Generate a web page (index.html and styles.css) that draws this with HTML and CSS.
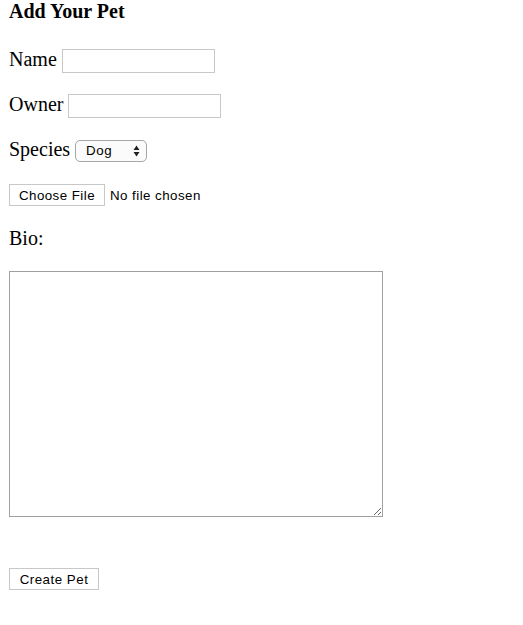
FILE: index.html
```
<!DOCTYPE html>
<html lang="en">
<head>
<meta charset="utf-8">
<title>Add Your Pet</title>
<link rel="stylesheet" href="styles.css">
</head>
<body>
<form class="pet-form">
  <h3 class="title">Add Your Pet</h3>
  <div class="field">
    <label class="label" for="name">Name</label>
    <input class="text-input" id="name" type="text">
  </div>
  <div class="field">
    <label class="label" for="owner">Owner</label>
    <input class="text-input" id="owner" type="text">
  </div>
  <div class="field field-species">
    <label class="label" for="species">Species</label>
    <select class="select" id="species">
      <option>Dog</option>
      <option>Cat</option>
      <option>Bird</option>
    </select>
  </div>
  <div class="field field-file">
    <input class="file-input" type="file">
  </div>
  <label class="label bio-label" for="bio">Bio:</label>
  <textarea class="bio" id="bio"></textarea>
  <button class="btn" type="submit">Create Pet</button>
</form>
</body>
</html>
```
FILE: styles.css
```
html, body {
  margin: 0;
  padding: 0;
  background: #ffffff;
}

body {
  color: #000000;
  font-family: "Liberation Serif", "Times New Roman", serif;
}

.pet-form {
  display: flex;
  flex-direction: column;
  align-items: flex-start;
  gap: 20px;
  padding: 0 9px;
}

.title {
  margin: 0 0 5px 0;
  font-size: 20px;
  line-height: 23px;
  font-weight: bold;
}

.field {
  display: flex;
  align-items: flex-start;
  gap: 5px;
}

.label {
  font-size: 20px;
  line-height: 23px;
}

.text-input {
  box-sizing: border-box;
  width: 153px;
  height: 24px;
  margin: 1px 0 0 0;
  padding: 1px 3px;
  border: 1px solid #c8c8c8;
  border-radius: 0;
  background: #ffffff;
  font-family: "Liberation Sans", Arial, sans-serif;
  font-size: 13px;
  outline: none;
}

.field-species {
  margin-bottom: 2px;
}

.select {
  -webkit-appearance: none;
  appearance: none;
  box-sizing: border-box;
  width: 72px;
  height: 22px;
  margin: 2px 0 0 0;
  padding: 0 0 0 10px;
  border: 1px solid #a6a6a6;
  border-radius: 5px;
  background-color: #fbfbfb;
  background-image: url("data:image/svg+xml;utf8,<svg xmlns='http://www.w3.org/2000/svg' width='7' height='12' viewBox='0 0 7 12'><path d='M3.5 0.5L6.5 5H0.5z M3.5 11.5L6.5 7H0.5z' fill='%23222'/></svg>");
  background-repeat: no-repeat;
  background-position: right 6px center;
  color: #000000;
  font-family: "Liberation Sans", Arial, sans-serif;
  font-size: 13.33px;
  letter-spacing: 0.5px;
  line-height: 20px;
}

.field-file {
  margin-bottom: 1px;
}

.file-input {
  height: 22px;
  margin: 0;
  padding: 0;
  font-family: "Liberation Sans", Arial, sans-serif;
  font-size: 13.33px;
  letter-spacing: 0.45px;
  color: #000000;
}

.file-input::file-selector-button {
  box-sizing: border-box;
  width: 96px;
  height: 22px;
  margin: 0 5px 0 0;
  padding: 0;
  border: 1px solid #c8c8c8;
  border-radius: 0;
  background: #ffffff;
  color: #000000;
  font-family: "Liberation Sans", Arial, sans-serif;
  font-size: 13.33px;
  letter-spacing: 0.45px;
}

.bio-label {
  margin-bottom: 1px;
}

.bio {
  box-sizing: border-box;
  width: 374px;
  height: 246px;
  margin: 0 0 31px 0;
  padding: 2px;
  border: 1px solid #a0a0a0;
  border-radius: 0;
  background: #ffffff;
  font-family: "Liberation Mono", monospace;
  font-size: 13px;
  outline: none;
}

.btn {
  box-sizing: border-box;
  width: 90px;
  height: 22px;
  margin: 0;
  padding: 0;
  border: 1px solid #c8c8c8;
  border-radius: 0;
  background: #ffffff;
  color: #000000;
  font-family: "Liberation Sans", Arial, sans-serif;
  font-size: 13.33px;
  letter-spacing: 0.5px;
}
```
